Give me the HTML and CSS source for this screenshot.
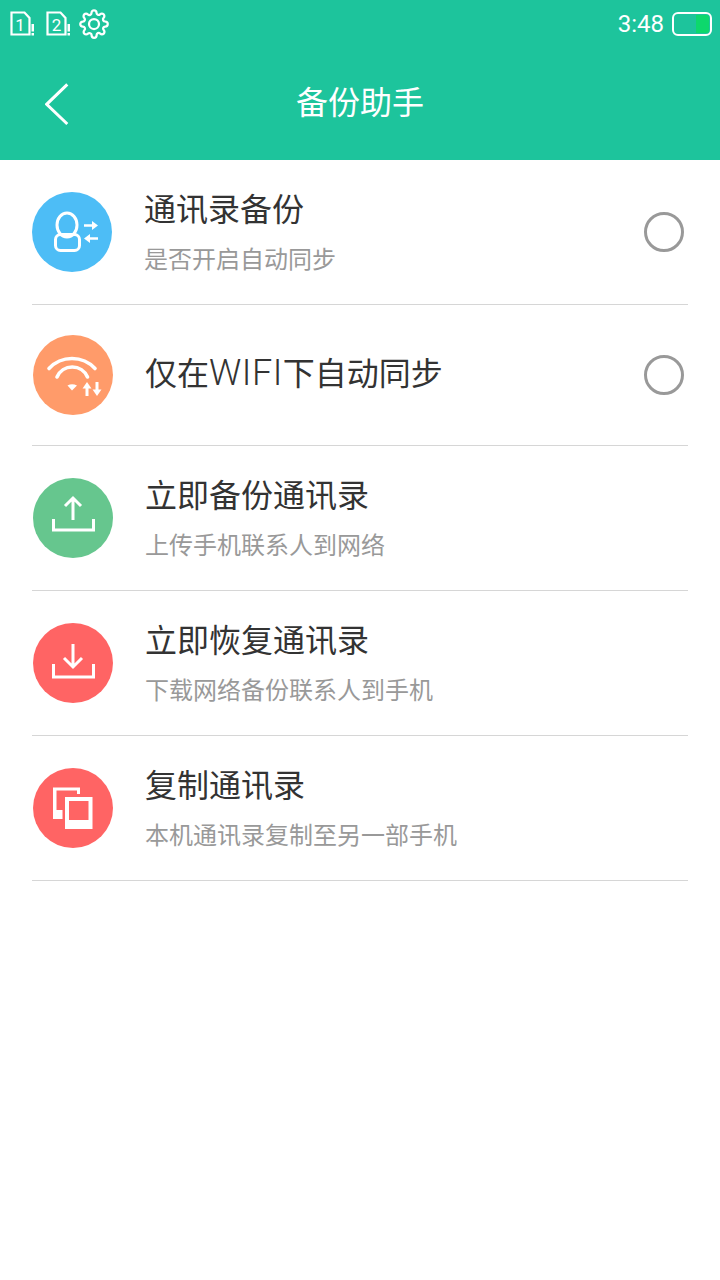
FILE: index.html
```html
<!DOCTYPE html>
<html lang="zh-CN">
<head>
    <meta charset="UTF-8">
    <meta name="viewport" content="width=device-width, initial-scale=1.0">
    <title>备份助手</title>
    <link rel="stylesheet" href="styles.css">
</head>
<body>
    <header class="top">
        <div class="status">
            <svg class="sim" viewBox="0 0 26 26">
                <path d="M1.5 1.5H14.5L19.5 7V23.5H1.5Z"/>
                <text x="10" y="20">1</text>
                <rect class="dot" x="21.5" y="13" width="2.5" height="7.5"/>
                <rect class="dot" x="21.5" y="22" width="2.5" height="2.5"/>
            </svg>
            <svg class="sim" viewBox="0 0 26 26">
                <path d="M1.5 1.5H14.5L19.5 7V23.5H1.5Z"/>
                <text x="10.5" y="20">2</text>
                <rect class="dot" x="21.5" y="13" width="2.5" height="7.5"/>
                <rect class="dot" x="21.5" y="22" width="2.5" height="2.5"/>
            </svg>
            <svg class="gear" viewBox="0 0 24 24">
                <circle cx="12" cy="12" r="4"/>
                <path d="M19.4 15a1.65 1.65 0 0 0 .33 1.82l.06.06a2 2 0 0 1 0 2.83 2 2 0 0 1-2.83 0l-.06-.06a1.65 1.65 0 0 0-1.82-.33 1.65 1.65 0 0 0-1 1.51V21a2 2 0 0 1-2 2 2 2 0 0 1-2-2v-.09A1.65 1.65 0 0 0 9 19.4a1.65 1.65 0 0 0-1.82.33l-.06.06a2 2 0 0 1-2.83 0 2 2 0 0 1 0-2.83l.06-.06a1.65 1.65 0 0 0 .33-1.82 1.65 1.65 0 0 0-1.51-1H3a2 2 0 0 1-2-2 2 2 0 0 1 2-2h.09A1.65 1.65 0 0 0 4.6 9a1.65 1.65 0 0 0-.33-1.82l-.06-.06a2 2 0 0 1 0-2.83 2 2 0 0 1 2.83 0l.06.06a1.65 1.65 0 0 0 1.82.33H9a1.65 1.65 0 0 0 1-1.51V3a2 2 0 0 1 2-2 2 2 0 0 1 2 2v.09a1.65 1.65 0 0 0 1 1.51 1.65 1.65 0 0 0 1.82-.33l.06-.06a2 2 0 0 1 2.83 0 2 2 0 0 1 0 2.83l-.06.06a1.65 1.65 0 0 0-.33 1.82V9a1.65 1.65 0 0 0 1.51 1H21a2 2 0 0 1 2 2 2 2 0 0 1-2 2h-.09a1.65 1.65 0 0 0-1.51 1z"/>
            </svg>
            <span class="time">3:48</span>
            <div class="battery"><div class="battery-level"></div></div>
        </div>
        <div class="toolbar">
            <svg class="back" viewBox="0 0 24 44">
                <path d="M22.3 2.3L1.7 22.3L22.3 42"/>
            </svg>
            <h1>备份助手</h1>
        </div>
    </header>

    <main class="list">
        <div class="item item-first">
            <svg class="icon" viewBox="0 0 80 80">
                <circle class="blue" cx="40" cy="40" r="40"/>
                <ellipse class="line" cx="35" cy="33" rx="10" ry="12"/>
                <rect class="line" x="23.5" y="42.5" width="24" height="16" rx="5" fill="#4dbdf6"/>
                <path class="thin" d="M52 33.5H61"/>
                <path class="solid" d="M60 29L66 33.5L60 38Z"/>
                <path class="thin" d="M57 46.5H66"/>
                <path class="solid" d="M58 42L52 46.5L58 51Z"/>
            </svg>
            <div class="text">
                <div class="name">通讯录备份</div>
                <div class="desc">是否开启自动同步</div>
            </div>
            <div class="radio"></div>
        </div>

        <div class="item item-wifi">
            <svg class="icon" viewBox="0 0 80 80">
                <circle class="orange" cx="40" cy="40" r="40"/>
                <path class="arc" d="M16 33.5A31.5 31.5 0 0 1 62 33.5"/>
                <path class="arc" d="M24 42A16.6 16.6 0 0 1 54.5 42"/>
                <path class="solid" d="M34.5 50.5Q39 48 44 50.5L39 55.5Z"/>
                <path class="line" d="M54 61V50"/>
                <path class="solid" d="M49.5 53.5L54 47L58.5 53.5Z"/>
                <path class="line" d="M64 47V58"/>
                <path class="solid" d="M59.5 54.5L64 61L68.5 54.5Z"/>
            </svg>
            <div class="text">
                <div class="name">仅在<span class="latin">WIFI</span>下自动同步</div>
            </div>
            <div class="radio"></div>
        </div>

        <div class="item">
            <svg class="icon" viewBox="0 0 80 80">
                <circle class="green" cx="40" cy="40" r="40"/>
                <path class="line" d="M20.5 41V52H60.5V41"/>
                <path class="line" d="M40 42V20M32 28L40 20L48 28"/>
            </svg>
            <div class="text">
                <div class="name">立即备份通讯录</div>
                <div class="desc">上传手机联系人到网络</div>
            </div>
        </div>

        <div class="item">
            <svg class="icon" viewBox="0 0 80 80">
                <circle class="red" cx="40" cy="40" r="40"/>
                <path class="line" d="M20.5 41V54H60.5V41"/>
                <path class="line" d="M40 21V44M31 35L40 44L49 35"/>
            </svg>
            <div class="text">
                <div class="name">立即恢复通讯录</div>
                <div class="desc">下载网络备份联系人到手机</div>
            </div>
        </div>

        <div class="item">
            <svg class="icon" viewBox="0 0 80 80">
                <circle class="red" cx="40" cy="40" r="40"/>
                <path class="solid" d="M20 19.5H47V26H44V22.5H23.5V42H29.5V51H20Z"/>
                <path class="solid" fill-rule="evenodd" d="M32 29H59.5V61H32ZM36 33V52H55.5V33Z"/>
            </svg>
            <div class="text">
                <div class="name">复制通讯录</div>
                <div class="desc">本机通讯录复制至另一部手机</div>
            </div>
        </div>
    </main>
</body>
</html>
```

FILE: styles.css
```css
*{
    box-sizing: border-box;
    padding: 0;
    margin: 0;
}
body{
    width: 720px;
    height: 1280px;
    background-color: #fff;
    font-family: "Roboto", "Noto Sans CJK SC", sans-serif;
    overflow: hidden;
}
.top{
    height: 160px;
    background-color: #1dc49c;
    color: #fff;
}
.status{
    height: 48px;
    display: flex;
    align-items: center;
    padding: 0 8px 0 10px;
}
.sim{
    width: 26px;
    height: 26px;
    margin-right: 10px;
}
.sim path{
    fill: none;
    stroke: #fff;
    stroke-width: 2.2;
}
.sim text{
    fill: #fff;
    font-size: 17px;
    text-anchor: middle;
}
.sim .dot{
    fill: #fff;
}
.gear{
    width: 30px;
    height: 30px;
    margin-left: -3px;
    fill: none;
    stroke: #fff;
    stroke-width: 1.8;
}
.time{
    margin-left: auto;
    font-size: 24px;
}
.battery{
    width: 40px;
    height: 24px;
    margin-left: 8px;
    border: 2px solid #fff;
    border-radius: 6px;
    padding: 1px;
    display: flex;
    justify-content: flex-end;
}
.battery-level{
    width: 13px;
    background-color: #0dd86c;
    border-radius: 0 3px 3px 0;
}
.toolbar{
    height: 112px;
    display: flex;
    align-items: center;
    padding-left: 45px;
    padding-bottom: 2px;
}
.back{
    width: 24px;
    height: 44px;
    margin-top: 2px;
    fill: none;
    stroke: #fff;
    stroke-width: 3;
}
.toolbar h1{
    margin-left: 227px;
    font-size: 32px;
    font-weight: 400;
    line-height: 44px;
}
.list{
    margin: 0 32px;
}
.item{
    height: 145px;
    display: flex;
    align-items: center;
    padding-left: 1px;
    padding-right: 4px;
    border-bottom: 1px solid #d6d6d6;
}
.item-first{
    padding-left: 0;
    padding-bottom: 1px;
}
.item-wifi{
    height: 141px;
}
.icon{
    width: 80px;
    height: 80px;
    flex-shrink: 0;
    margin-right: 32px;
}
.blue{ fill: #4dbdf6; }
.orange{ fill: #ff9b6a; }
.green{ fill: #66c68e; }
.red{ fill: #ff6464; }
.line{
    fill: none;
    stroke: #fff;
    stroke-width: 3;
}
.arc{
    fill: none;
    stroke: #fff;
    stroke-width: 3.6;
    stroke-linecap: round;
}
.thin{
    fill: none;
    stroke: #fff;
    stroke-width: 2.5;
}
.solid{
    fill: #fff;
}
.text{
    flex: 1;
    margin-top: 2px;
}
.item-wifi .text{
    margin-top: 0;
    margin-bottom: 2px;
}
.name{
    font-size: 32px;
    line-height: 44px;
    color: #333;
}
.latin{
    font-size: 36px;
    font-weight: 300;
    line-height: 1;
    letter-spacing: 0.5px;
}
.desc{
    margin-top: 10px;
    font-size: 24px;
    line-height: 36px;
    color: #999;
}
.radio{
    width: 40px;
    height: 40px;
    border: 3px solid #999;
    border-radius: 50%;
}
```
